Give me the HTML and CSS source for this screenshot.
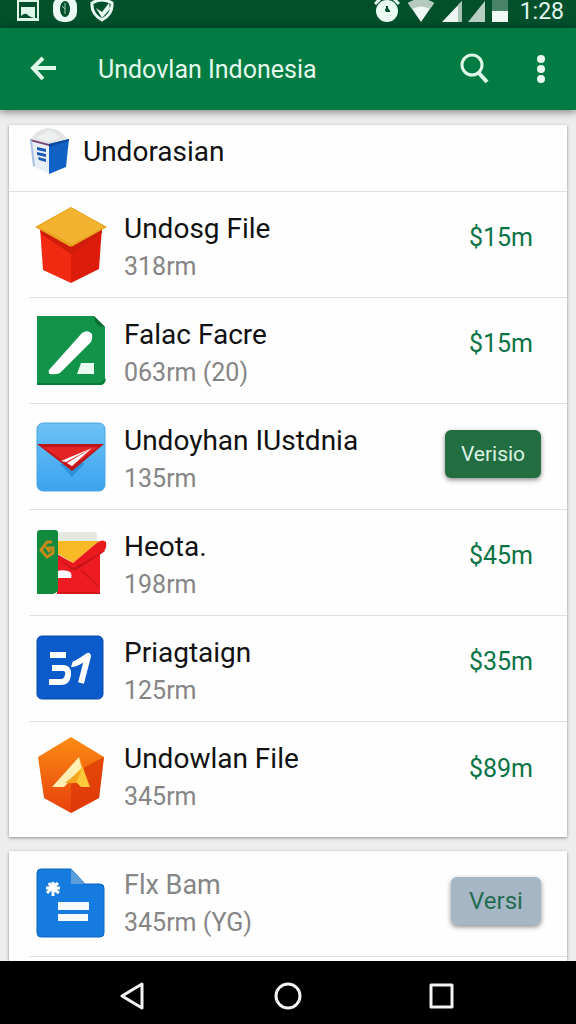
FILE: index.html
```html
<!DOCTYPE html>
<html lang="id">
<head>
    <meta charset="UTF-8">
    <meta name="viewport" content="width=device-width, initial-scale=1.0">
    <title>Undovlan Indonesia</title>
    <link rel="stylesheet" href="styles.css">
</head>
<body>
<!-- Status bar -->
<div class="status-bar">
    <div class="status-left">
        <svg width="24" height="24" viewBox="0 0 24 24">
            <rect x="1" y="-1" width="22" height="22" fill="#dff5ea"/>
            <rect x="3" y="2" width="18" height="16" fill="#024f2c"/>
            <path d="M5 7h14v11q-6-1-8-4-3-1-6 2z" fill="#dff5ea"/>
        </svg>
        <svg width="26" height="24" viewBox="0 0 26 24">
            <rect x="1" y="-4" width="24" height="26" rx="10" fill="#e9fbf2"/>
            <ellipse cx="13" cy="9" rx="5" ry="8" fill="#024f2c"/>
            <path d="M13 3v11M10 6l3 3" stroke="#9ccbb4" stroke-width="1"/>
        </svg>
        <svg width="24" height="24" viewBox="0 0 24 24">
            <path d="M2 3Q12-3 22 3Q23 14 12 20Q1 14 2 3z" fill="#024f2c" stroke="#e9fbf2" stroke-width="3"/>
            <path d="M6 8l6 4 7-9 1 6-8 9z" fill="#e9fbf2"/>
        </svg>
    </div>
    <div class="status-right">
        <svg width="26" height="24" viewBox="0 0 26 24">
            <path d="M1 4l5-5M25 4l-5-5" stroke="#e9fbf2" stroke-width="3"/>
            <circle cx="13" cy="11" r="11" fill="#e9fbf2"/>
            <path d="M13 6v5h3" fill="none" stroke="#024f2c" stroke-width="2"/>
            <circle cx="13" cy="10" r="2" fill="#024f2c"/>
        </svg>
        <svg width="30" height="24" viewBox="0 0 30 24">
            <path d="M2 3Q15-5 28 3L15 22z" fill="#f1f7f4"/>
            <path d="M2 3Q15-5 28 3L24 9Q15 4 6 9z" fill="#b5c9bf"/>
        </svg>
        <svg width="20" height="24" viewBox="0 0 20 24">
            <path d="M20 1v21H0z" fill="#eef5f1"/>
            <path d="M20 1v21h-4V5z" fill="#a9c4b6"/>
        </svg>
        <svg width="18" height="24" viewBox="0 0 18 24">
            <path d="M17 1v21H0z" fill="#b9cfc4"/>
        </svg>
        <svg width="16" height="24" viewBox="0 0 16 24">
            <path d="M0 0h16v11H0z" fill="#4a8468"/>
            <path d="M0 11h16v11H0z" fill="#f1f9f5"/>
        </svg>
        <span class="clock">1:28</span>
    </div>
</div>

<!-- App bar -->
<header class="app-bar">
    <button class="icon-btn" aria-label="Back">
        <svg width="28" height="28" viewBox="0 0 28 28" fill="none" stroke="#dff8ea" stroke-width="4">
            <path d="M13 3L3 13l10 11M3 13h23"/>
        </svg>
    </button>
    <h1>Undovlan Indonesia</h1>
    <button class="icon-btn" aria-label="Search">
        <svg width="30" height="32" viewBox="0 0 30 32" fill="none" stroke="#dff8ea">
            <circle cx="12" cy="12" r="10" stroke-width="3"/>
            <path d="M18 19l9 10" stroke-width="4"/>
        </svg>
    </button>
    <button class="icon-btn" aria-label="More options">
        <svg width="10" height="28" viewBox="0 0 10 28" fill="#e9fbf2">
            <circle cx="5" cy="4" r="4"/>
            <circle cx="5" cy="14" r="4"/>
            <circle cx="5" cy="24" r="4"/>
        </svg>
    </button>
</header>

<main class="content">
    <section class="card">
        <div class="card-header">
            <svg width="40" height="46" viewBox="0 0 40 46">
                <path d="M2 11Q7 2 18 0Q31 0 38 11L20 17z" fill="#e2e4e5"/>
                <path d="M7 10l14-8 10 7-11 5z" fill="#eef0f0"/>
                <path d="M1 11l19 5v30L4 38z" fill="#e9eef7"/>
                <path d="M1 11l19 5v2L1 13z" fill="#7b4a75"/>
                <path d="M1 11l2 1 3 27-2-1z" fill="#a9bfe0"/>
                <path d="M20 16l20-5-3 28-17 7z" fill="#1261c4"/>
                <path d="M20 16l20-5v2l-20 6z" fill="#0a4a9d"/>
                <path d="M8 19l9 2v3l-9-2zM8 24l9 2v3l-9-2zM9 29l8 2v3l-7-2z" fill="#1c58b5"/>
            </svg>
            <h2>Undorasian</h2>
        </div>
        <ul class="file-list">
            <li class="file-row">
                <svg class="file-icon" width="72" height="76" viewBox="0 0 72 76">
                    <path d="M5 20l31 16v40L8 63z" fill="#f22a12"/>
                    <path d="M67 20L36 36v40l28-14z" fill="#de1c0c"/>
                    <path d="M5 22l31 18 31-18v4L36 47 6 27z" fill="#cf1c0b"/>
                    <path d="M36 0l36 20-34 19q-2 1-4 0L0 20z" fill="#e9a51f"/>
                    <path d="M36 1l33 19-32 17-33-17z" fill="#f3b331"/>
                </svg>
                <div class="file-info">
                    <h3>Undosg File</h3>
                    <p>318rm</p>
                </div>
                <span class="price">$15m</span>
            </li>
            <li class="file-row">
                <svg class="file-icon" width="72" height="76" viewBox="0 0 72 76">
                    <path d="M2 3h57l11 11v53q0 5-5 5H2z" fill="#11934a"/>
                    <path d="M59 3l11 11q-10 1-11-11z" fill="#0a6833"/>
                    <path d="M2 71h62q5 0 6-5" fill="none" stroke="#0a7c3b" stroke-width="2"/>
                    <path d="M14 57L47 20q6-4 10 1 1 4-1 8L26 59q-3 3-11 2-2-1-1-4z" fill="#fff"/>
                    <path d="M46 50h13v11H42z" fill="#eafbf0"/>
                </svg>
                <div class="file-info">
                    <h3>Falac Facre</h3>
                    <p>063rm (20)</p>
                </div>
                <span class="price">$15m</span>
            </li>
            <li class="file-row">
                <svg class="file-icon" width="72" height="76" viewBox="0 0 72 76">
                    <defs>
                        <linearGradient id="sky" x2="0" y2="1">
                            <stop offset="0" stop-color="#6cc1f5"/>
                            <stop offset="1" stop-color="#3ba4ee"/>
                        </linearGradient>
                    </defs>
                    <rect x="2" y="4" width="68" height="68" rx="6" fill="url(#sky)" stroke="#4ba6e0"/>
                    <path d="M25 45l12 13 13-14z" fill="#2c93d6"/>
                    <path d="M2 25h67L37 52z" fill="#bd151a"/>
                    <path d="M8 28h55L37 48z" fill="#e32424"/>
                    <path d="M57 29L26 42l5 1zM57 29L32 44l5 3z" fill="#fff"/>
                </svg>
                <div class="file-info">
                    <h3>Undoyhan IUstdnia</h3>
                    <p>135rm</p>
                </div>
                <button class="btn">Verisio</button>
            </li>
            <li class="file-row">
                <svg class="file-icon" width="72" height="76" viewBox="0 0 72 76">
                    <path d="M22 7h36q4 0 4 4v24H22z" fill="#e5e8df"/>
                    <path d="M22 16h42L38 38 22 28z" fill="#f8b924"/>
                    <path d="M22 29l17 10 26-20v47q0 3-3 3H22z" fill="#ee1c22"/>
                    <path d="M64 62L46 45M65 68H22" stroke="#d5151b" stroke-width="2"/>
                    <path d="M22 31l15 12q3 1 6-1l26-17" fill="none" stroke="#c41219" stroke-width="3"/>
                    <path d="M22 30l16 8 25-21q5-3 8 0 1 6-2 9L41 42q-3 1-5 0L22 33z" fill="#e9191d"/>
                    <path d="M22 46q10-2 14 2 1 3 0 5H22z" fill="#fff"/>
                    <path d="M2 8q0-3 3-3h15q3 0 3 3v58q-3 3-5 3H2z" fill="#128a3d"/>
                    <path d="M17 17h-5l-6 8 6 7 6-4v-5h-6l3 4" fill="none" stroke="#c58a1b" stroke-width="3"/>
                </svg>
                <div class="file-info">
                    <h3>Heota.</h3>
                    <p>198rm</p>
                </div>
                <span class="price">$45m</span>
            </li>
            <li class="file-row">
                <svg class="file-icon" width="72" height="76" viewBox="0 0 72 76">
                    <rect x="2" y="5" width="66" height="63" rx="5" fill="#0c5bcb" stroke="#084aa9"/>
                    <g fill="none" stroke="#fff" stroke-width="6">
                        <path d="M15 24h16"/>
                        <path d="M17 37h11q6 0 5 7-1 7-7 7H14"/>
                        <path d="M37 33q3 1 16-8l-7 27" stroke-linejoin="round"/>
                    </g>
                </svg>
                <div class="file-info">
                    <h3>Priagtaign</h3>
                    <p>125rm</p>
                </div>
                <span class="price">$35m</span>
            </li>
            <li class="file-row">
                <svg class="file-icon" width="72" height="76" viewBox="0 0 72 76">
                    <defs>
                        <linearGradient id="fire" x2="0" y2="1">
                            <stop offset="0" stop-color="#fb8c12"/>
                            <stop offset="1" stop-color="#e8400d"/>
                        </linearGradient>
                    </defs>
                    <path d="M36 0l33 20-5 41-28 15L9 61 3 20z" fill="url(#fire)"/>
                    <path d="M69 20L50 30 36 48v28l28-15z" fill="#dc3507" opacity=".7"/>
                    <path d="M44 20L17 50h12l18-18z" fill="#ffefb2"/>
                    <path d="M44 20l3 10-14 15h8l5 5h9z" fill="#ffc83a"/>
                    <path d="M30 46l17-14-6 14z" fill="#f5a51c"/>
                </svg>
                <div class="file-info">
                    <h3>Undowlan File</h3>
                    <p>345rm</p>
                </div>
                <span class="price">$89m</span>
            </li>
        </ul>
    </section>

    <section class="card">
        <ul class="file-list">
            <li class="file-row disabled">
                <svg class="file-icon" width="72" height="76" viewBox="0 0 72 76">
                    <path d="M6 3h30l14 15h15q4 0 4 4v45q0 4-4 4H6q-4 0-4-4V7q0-4 4-4z" fill="#167bdf" stroke="#0d65c2"/>
                    <path d="M36 3l14 15H36z" fill="#5b9fd9"/>
                    <path d="M14 17l3 5 6-5M12 27l5-5 7 5M18 16v14M11 22h14" fill="none" stroke="#fff" stroke-width="3"/>
                    <path d="M23 36h31v8H23zM23 48h30v7H23z" fill="#f3fbff"/>
                </svg>
                <div class="file-info">
                    <h3>Flx Bam</h3>
                    <p>345rm (YG)</p>
                </div>
                <button class="btn btn-muted">Versi</button>
            </li>
        </ul>
    </section>
</main>

<!-- System navigation -->
<nav class="nav-bar">
    <button class="icon-btn" aria-label="Back">
        <svg width="28" height="30" viewBox="0 0 28 30" fill="none" stroke="#f4f4f4" stroke-width="3" stroke-linejoin="round">
            <path d="M22 3v24L2 15z"/>
        </svg>
    </button>
    <button class="icon-btn" aria-label="Home">
        <svg width="28" height="30" viewBox="0 0 28 30" fill="none" stroke="#f4f4f4" stroke-width="3">
            <circle cx="14" cy="15" r="12"/>
        </svg>
    </button>
    <button class="icon-btn" aria-label="Recent apps">
        <svg width="28" height="30" viewBox="0 0 28 30" fill="none" stroke="#f4f4f4" stroke-width="3" stroke-linejoin="round">
            <rect x="3" y="4" width="21" height="22"/>
        </svg>
    </button>
</nav>
</body>
</html>
```
FILE: styles.css
```css
* {
    box-sizing: border-box;
}

body {
    margin: 0;
    font-family: Roboto, Arial, sans-serif;
    background-color: #ededee;
    display: flex;
    flex-direction: column;
    height: 100vh;
    overflow: hidden;
}

h1, h2, h3, p, ul {
    margin: 0;
    padding: 0;
    font-weight: normal;
}

svg {
    display: block;
    flex-shrink: 0;
}

/* Status bar */
.status-bar {
    display: flex;
    justify-content: space-between;
    flex-shrink: 0;
    height: 28px;
    padding: 0 12px 0 16px;
    background-color: #024f2c;
}

.status-left {
    display: flex;
    gap: 12px;
}

.status-right {
    display: flex;
    gap: 6px;
}

.clock {
    margin-left: 6px;
    color: #e3f7ec;
    font-size: 23px;
    line-height: 24px;
}

/* App bar */
.app-bar {
    display: flex;
    align-items: center;
    flex-shrink: 0;
    height: 82px;
    padding: 0 30px;
    background-color: #037c43;
    box-shadow: 0 2px 8px rgba(0, 0, 0, 0.45);
    z-index: 1;
}

.app-bar h1 {
    flex: 1;
    margin-left: 40px;
    color: #e3f9ed;
    font-size: 25px;
}

.icon-btn {
    padding: 0;
    border: none;
    background: none;
    cursor: pointer;
}

.icon-btn + .icon-btn {
    margin-left: 46px;
}

/* Cards */
.content {
    flex: 1;
    min-height: 0;
    overflow: hidden;
    padding: 15px 9px 0;
}

.card {
    margin-bottom: 14px;
    background-color: #fefefe;
    box-shadow: 0 1px 3px rgba(0, 0, 0, 0.4);
}

.card-header {
    display: flex;
    align-items: center;
    gap: 14px;
    height: 67px;
    padding: 0 20px 14px;
    border-bottom: 1px solid #e2e2e2;
}

.card-header h2 {
    font-size: 28px;
    color: #111;
}

.file-list {
    list-style: none;
    padding-bottom: 9px;
}

.file-row {
    display: flex;
    align-items: center;
    height: 106px;
    margin-left: 20px;
    padding: 0 26px 0 6px;
    border-bottom: 1px solid #e2e2e2;
}

.card:first-child .file-row:last-child {
    border-bottom: none;
}

.file-info {
    flex: 1;
    margin-left: 17px;
    padding-top: 6px;
}

.file-info h3 {
    color: #111;
    font-size: 28px;
    line-height: 38px;
}

.file-info p {
    color: #858585;
    font-size: 25px;
    line-height: 38px;
}

.price {
    padding: 0 8px 14px 0;
    color: #0a7446;
    font-size: 25px;
}

.btn {
    width: 96px;
    height: 48px;
    margin-bottom: 6px;
    padding: 0;
    border: none;
    border-radius: 6px;
    background-color: #226e40;
    box-shadow: 0 2px 5px rgba(0, 0, 0, 0.45);
    color: #d9f3e3;
    font-family: inherit;
    font-size: 21px;
    cursor: pointer;
}

.btn-muted {
    width: 90px;
    background-color: #a5b6c5;
    color: #246c50;
    font-size: 24px;
}

.file-row.disabled h3 {
    color: #858585;
    font-size: 27px;
}

.disabled .file-info {
    padding-top: 0;
}

/* System navigation */
.nav-bar {
    display: flex;
    justify-content: center;
    flex-shrink: 0;
    align-items: center;
    height: 63px;
    padding-top: 6px;
    background-color: #000;
}

.nav-bar .icon-btn + .icon-btn {
    margin-left: 126px;
}
```
